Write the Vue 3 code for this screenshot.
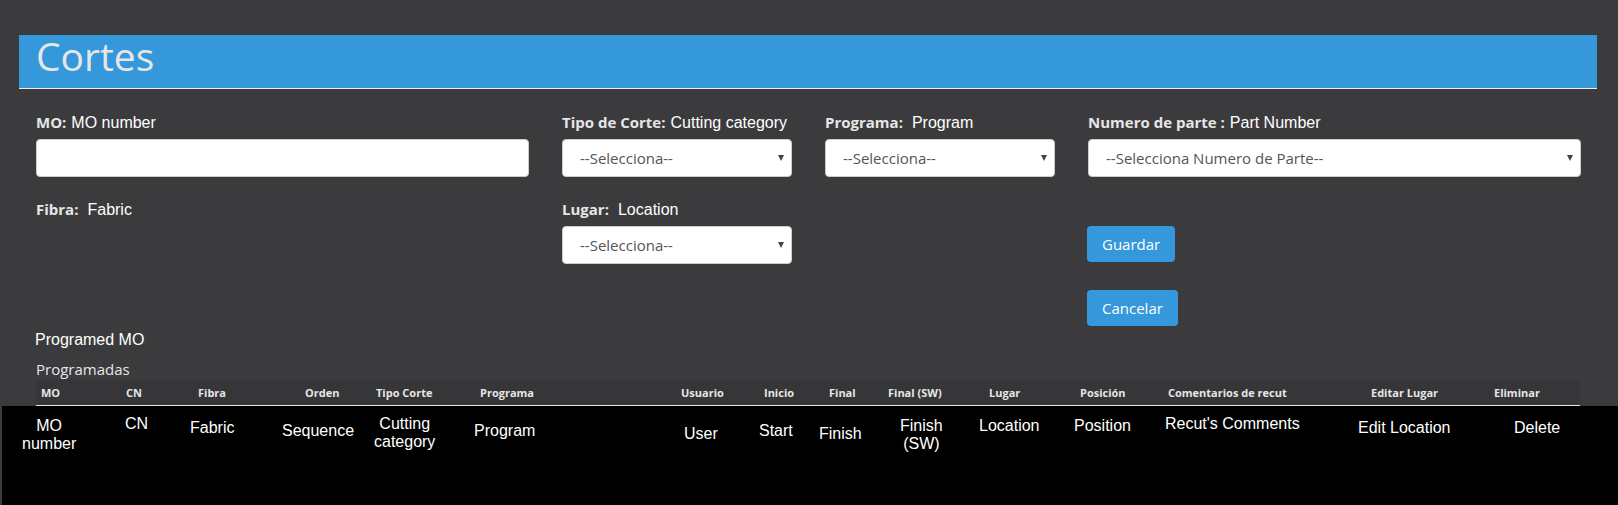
<script setup>
import { ref } from 'vue'

const mo = ref('')
const tipo = ref('')
const programa = ref('')
const parte = ref('')
const lugar = ref('')

const headings = [
  'MO', 'CN', 'Fibra', 'Orden', 'Tipo Corte', 'Programa', 'Usuario', 'Inicio',
  'Final', 'Final (SW)', 'Lugar', 'Posición', 'Comentarios de recut',
  'Editar Lugar', 'Eliminar',
]

const notes = [
  { lines: ['MO', 'number'], level: 'l1' },
  { lines: ['CN'], level: 'l0' },
  { lines: ['Fabric'], level: 'l2' },
  { lines: ['Sequence'], level: 'l3' },
  { lines: ['Cutting', 'category'], level: 'l0' },
  { lines: ['Program'], level: 'l3' },
  { lines: ['User'], level: 'l4' },
  { lines: ['Start'], level: 'l3' },
  { lines: ['Finish'], level: 'l4' },
  { lines: ['Finish', '(SW)'], level: 'l1' },
  { lines: ['Location'], level: 'l1' },
  { lines: ['Position'], level: 'l1' },
  { lines: ["Recut's Comments"], level: 'l0' },
  { lines: ['Edit Location'], level: 'l2' },
  { lines: ['Delete'], level: 'l2' },
]
</script>

<template>
  <main class="page">
    <header class="banner"><h1>Cortes</h1></header>

    <form class="fields" @submit.prevent>
      <div class="field">
        <label for="mo"><b>MO:</b><span>MO number</span></label>
        <input id="mo" v-model="mo" class="control" type="text" />
      </div>
      <div class="field">
        <label for="tipo"><b>Tipo de Corte:</b><span>Cutting category</span></label>
        <div class="pick">
          <select id="tipo" v-model="tipo" class="control">
            <option value="">--Selecciona--</option>
          </select>
          <svg class="arrow" viewBox="0 0 6 6"><path d="M0 0h6L3 6z" /></svg>
        </div>
      </div>
      <div class="field">
        <label for="programa" class="loose"><b>Programa:</b><span>Program</span></label>
        <div class="pick">
          <select id="programa" v-model="programa" class="control">
            <option value="">--Selecciona--</option>
          </select>
          <svg class="arrow" viewBox="0 0 6 6"><path d="M0 0h6L3 6z" /></svg>
        </div>
      </div>
      <div class="field">
        <label for="parte"><b>Numero de parte :</b><span>Part Number</span></label>
        <div class="pick">
          <select id="parte" v-model="parte" class="control">
            <option value="">--Selecciona Numero de Parte--</option>
          </select>
          <svg class="arrow" viewBox="0 0 6 6"><path d="M0 0h6L3 6z" /></svg>
        </div>
      </div>

      <div class="field">
        <p class="caption loose"><b>Fibra:</b><span>Fabric</span></p>
      </div>
      <div class="field">
        <label for="lugar" class="loose"><b>Lugar:</b><span>Location</span></label>
        <div class="pick">
          <select id="lugar" v-model="lugar" class="control">
            <option value="">--Selecciona--</option>
          </select>
          <svg class="arrow" viewBox="0 0 6 6"><path d="M0 0h6L3 6z" /></svg>
        </div>
      </div>
      <div class="actions">
        <button type="submit">Guardar</button>
        <button type="button">Cancelar</button>
      </div>
    </form>

    <p class="translated">Programed MO</p>
    <h2>Programadas</h2>

    <table>
      <thead>
        <tr>
          <th v-for="h in headings" :key="h" scope="col">{{ h }}</th>
        </tr>
      </thead>
      <tbody>
        <tr>
          <td v-for="(n, i) in notes" :key="i" :class="n.level">
            <div class="note">
              <div v-for="line in n.lines" :key="line">{{ line }}</div>
            </div>
          </td>
        </tr>
      </tbody>
    </table>
  </main>
</template>

<style>
body {
  margin: 0;
  background: #3b3b3d;
}
</style>

<style scoped>
.page {
  box-sizing: border-box;
  display: flex;
  flex-direction: column;
  min-height: 100vh;
  padding-top: 35px;
  color: #e6e6e6;
  background: #3b3b3d;
  font: 15px/21px "Open Sans", sans-serif;
}
.banner {
  margin: 0 21px 0 19px;
  padding: 0 17px 12px;
  background: #3498db;
  border-bottom: 1px solid #f0f0f0;
}
h1 {
  margin: 0;
  font-size: 39px;
  line-height: 41px;
  font-weight: 400;
}
.fields {
  display: grid;
  grid-template-columns: 4fr 2fr 2fr 4fr;
  row-gap: 22px;
  align-items: start;
  margin: 23px 21px 0 19px;
}
.field {
  min-width: 0;
  padding: 0 16px 0 17px;
}
label,
.caption {
  display: flex;
  align-items: baseline;
  gap: 5px;
  height: 21px;
  margin: 0 0 6px;
  white-space: nowrap;
}
.loose {
  gap: 9px;
}
label span,
.caption span,
.translated {
  color: #fff;
  font-family: "Liberation Sans", Arial, sans-serif;
  font-size: 16px;
}
.control {
  display: block;
  box-sizing: border-box;
  width: 100%;
  height: 38px;
  margin: 0;
  padding: 0 17px;
  border: 1px solid #ccc;
  border-radius: 4px;
  background: #fff;
  color: #555;
  font: 15px/21px "Open Sans", sans-serif;
  appearance: none;
}
.pick {
  position: relative;
}
.arrow {
  position: absolute;
  top: 16px;
  right: 8px;
  width: 6px;
  height: 6px;
  fill: #444;
  pointer-events: none;
}
.actions {
  grid-column: 4;
  display: flex;
  flex-direction: column;
  align-items: flex-start;
  gap: 28px;
  padding: 27px 16px 0;
}
button {
  height: 36px;
  padding: 0 15px;
  border: 0;
  border-radius: 4px;
  background: #3498db;
  color: #fff;
  font: 15px/21px "Open Sans", sans-serif;
}
.translated {
  margin: 3px 35px 0;
}
h2 {
  margin: 9px 36px 0;
  font-size: 15px;
  line-height: 21px;
  font-weight: 400;
}
table {
  display: flex;
  flex: 1;
  flex-direction: column;
}
thead {
  display: block;
  margin: 0 38px 0 36px;
  background: #363638;
  border-bottom: 1px solid #e6e6e6;
}
thead tr {
  display: grid;
  grid-template-columns: 85fr 72fr 107fr 71fr 104fr 201fr 83fr 65fr 59fr 101fr 91fr 88fr 203fr 123fr 91fr;
}
th {
  min-width: 0;
  padding: 0 0 0 5px;
  font-size: 11px;
  line-height: 25px;
  font-weight: 700;
  text-align: left;
  white-space: nowrap;
}
tbody {
  display: block;
  flex: 1;
  margin-left: 2px;
  background: #000;
}
tbody tr {
  display: grid;
  grid-template-columns: 103fr 65fr 92fr 92fr 100fr 210fr 75fr 60fr 81fr 79fr 95fr 91fr 193fr 156fr 104fr;
  padding: 8px 0 8px 20px;
}
td {
  min-width: 0;
  padding: 0;
  color: #fff;
  font: 16px/18px "Liberation Sans", Arial, sans-serif;
  white-space: nowrap;
}
.note {
  display: inline-block;
  text-align: center;
}
.l0 {
  padding-top: 1px;
}
.l1 {
  padding-top: 3px;
}
.l2 {
  padding-top: 5px;
}
.l3 {
  padding-top: 8px;
}
.l4 {
  padding-top: 11px;
}
</style>
